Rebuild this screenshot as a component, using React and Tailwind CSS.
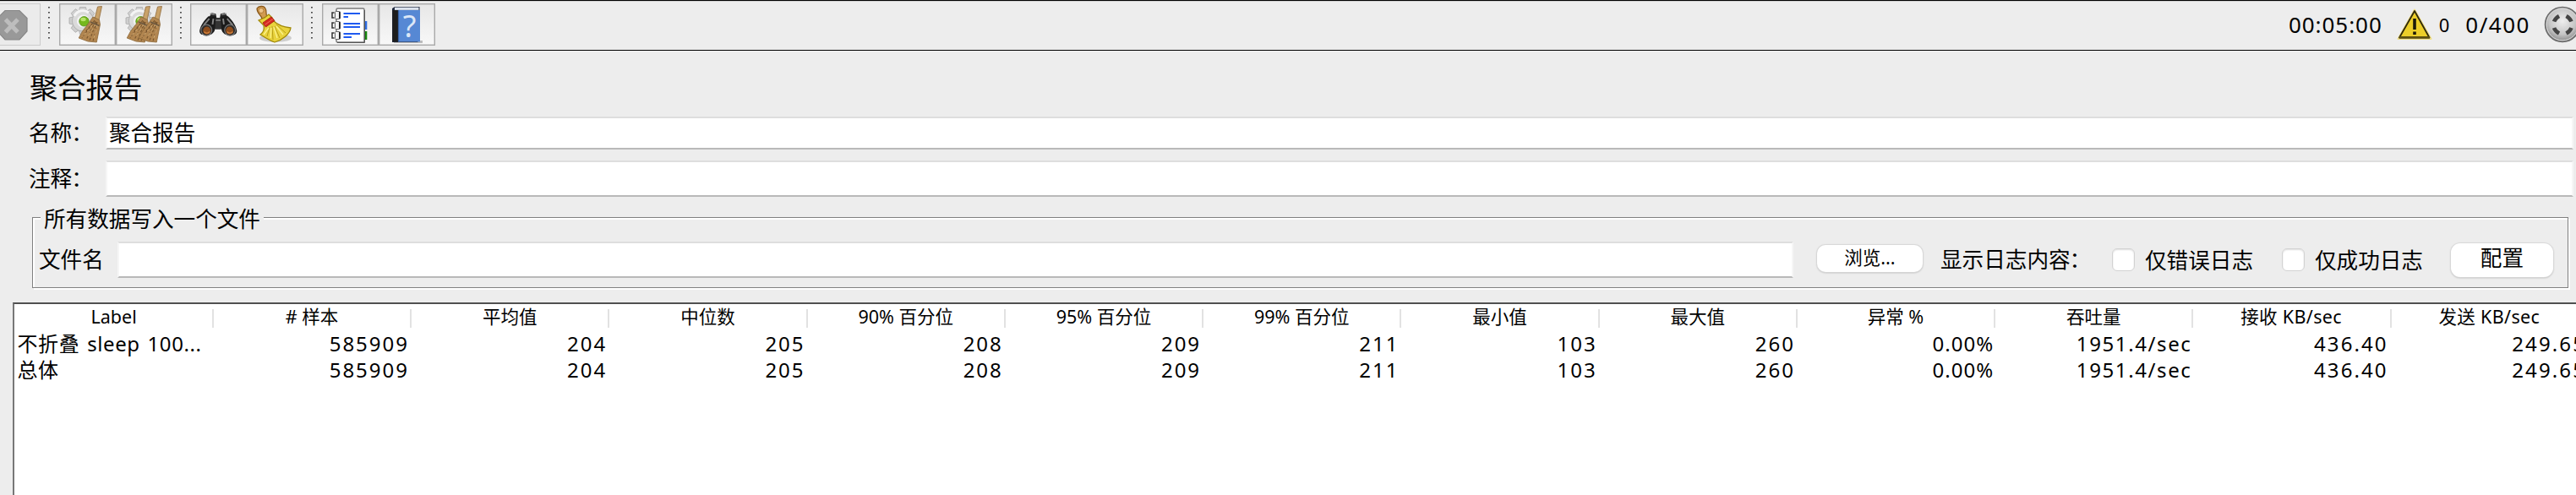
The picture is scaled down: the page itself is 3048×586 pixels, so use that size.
const columns = [
  ['Label', '不折叠 sleep 100...', '总体'],
  ['# 样本', '585909', '585909'],
  ['平均值', '204', '204'],
  ['中位数', '205', '205'],
  ['90% 百分位', '208', '208'],
  ['95% 百分位', '209', '209'],
  ['99% 百分位', '211', '211'],
  ['最小值', '103', '103'],
  ['最大值', '260', '260'],
  ['异常 %', '0.00%', '0.00%'],
  ['吞吐量', '1951.4/sec', '1951.4/sec'],
  ['接收 KB/sec', '436.40', '436.40'],
  ['发送 KB/sec', '249.65', '249.65'],
];

function cellStyle(value, i) {
  if (i === 0) return 'pl-[2px] [word-spacing:2px] tracking-[0.600px]';
  if (value.endsWith('%')) return 'justify-end pr-[2px] tracking-[1.000px]';
  if (value.endsWith('sec')) return 'justify-end pr-[2px] tracking-[1.600px]';
  if (value.includes('.')) return 'justify-end pr-[4px] tracking-[2.100px]';
  return 'justify-end pr-[3px] tracking-[2.000px]';
}

function ToolButton({ children }) {
  return (
    <div className="h-[50px] w-[67px] shrink-0 border border-[#a9a9a9] bg-linear-to-b from-[#e7e7e7] to-[#f8f8f8] shadow-[inset_0_0_0_0.5px_#b5b5b5]">
      <svg className="block h-12 w-[65px]" viewBox="1 1 65 48">{children}</svg>
    </div>
  );
}

function Dots() {
  return (
    <svg className="h-[38px] w-[2px] shrink-0" viewBox="0 0 2 38">
      {[0, 6, 12, 18, 24, 30, 36].map((y) => (
        <rect key={y} x="0.2" y={y} width="1.5" height="1.6" fill="#222" />
      ))}
    </svg>
  );
}

function Gear() {
  const angles = [0, 45, 90, 135, 180, 225, 270, 315];
  return (
    <g>
      <g fill="#cfcfcf" stroke="#aaa" strokeWidth="0.8">
        {angles.map((a) => (
          <path key={a} d="M23.5 9 L24.500 4.500 H31.500 L32.500 9 Z" transform={`rotate(${a} 28 20.5)`} />
        ))}
        <circle cx="28" cy="20.5" r="12.6" />
      </g>
      <circle cx="28" cy="20.5" r="11.8" fill="#dadada" />
      <path d="M18 15a11 11 0 0 1 17-4" stroke="#f4f4f4" strokeWidth="3" fill="none" />
      <circle cx="28.5" cy="21" r="7.6" fill="#f2f2f2" />
      <circle cx="29.5" cy="21.3" r="5.7" fill="#75b81d" stroke="#4f8b12" strokeWidth="0.8" />
      <ellipse cx="28.5" cy="19" rx="3.2" ry="2.2" fill="#b7e36a" />
    </g>
  );
}

function StrawBroom({ x = 0 }) {
  return (
    <g transform={`translate(${x} 0)`}>
      <path d="M45.5 4 L50.5 3.5 L47 20 L42 18.5 Z" fill="#c9a269" stroke="#8f6b3e" strokeWidth="0.8" />
      <path d="M40 16 L47.500 19.500 L48.500 25 L44.300 46 L34 45 L23.2 41 L27.500 33 L34.500 24 Z" fill="#b28650" stroke="#8a6738" strokeWidth="0.8" />
      <path d="M42 20 L27 41 M43 21 L32 43 M44 22 L36 44 M45 22 L40 45 M40 23 L30 35" stroke="#76542d" strokeWidth="1.1" strokeDasharray="3 2" fill="none" />
      <path d="M43 25 L33 40 M45 26 L41 41 M39 26 L29 38" stroke="#d5b07a" strokeWidth="1" strokeDasharray="3 3" fill="none" />
      <path d="M37 22 L47.500 26.500" stroke="#6d5940" strokeWidth="1.6" />
    </g>
  );
}

function Binoculars() {
  return (
    <g transform="translate(-0.4 0.6) scale(0.96 0.97)">
      <path d="M24 16 L27 11 L32 12 L33 17 L37 17 L38 12 L43 11 L47 16 L49 22 H21 Z" fill="#242424" />
      <rect x="30" y="17" width="10" height="14" rx="2" fill="#343434" />
      <path d="M23 15 C18 20 13 26 12 33 C12 38 17 39 22 38 C27 38 30 35 31 31 L32 16 Z" fill="#1b1b1b" />
      <path d="M47 15 C52 20 57 26 58 33 C58 38 53 39 48 38 C43 38 40 35 39 31 L38 16 Z" fill="#1b1b1b" />
      <path d="M24 18 L17 26 M29 18 L28 25 M46 18 L53 26 M41 18 L42 25" stroke="#858585" strokeWidth="2" />
      <path d="M25 12 L31 13 M39 13 L45 12 M32 20 H38" stroke="#858585" strokeWidth="1.5" />
      <circle cx="20.5" cy="32" r="6.7" fill="#2b2b2b" stroke="#777" strokeWidth="1.2" />
      <circle cx="49.5" cy="32" r="6.7" fill="#2b2b2b" stroke="#777" strokeWidth="1.2" />
      <circle cx="21" cy="32.5" r="4.7" fill="#8d4c1c" />
      <circle cx="49" cy="32.5" r="4.7" fill="#8d4c1c" />
      <path d="M17.5 34q4 3.5 7 0M46 34q4 3.5 7 0" stroke="#ce7f3c" strokeWidth="1.6" fill="none" />
    </g>
  );
}

function YellowBroom() {
  return (
    <g>
      <ellipse cx="34" cy="41" rx="19" ry="5" fill="#bdbdbd" opacity="0.7" />
      <path d="M12 6 C14 3 20 2 22 6 C24 9 22 12 24 16 L18 18 C17 14 12 12 12 6 Z" fill="#d29b50" stroke="#855417" strokeWidth="1.2" />
      <circle cx="17" cy="8.5" r="3" fill="#edc488" stroke="#a56f2a" strokeWidth="0.8" />
      <path d="M14 20 L21 17 L26 13 L30 17 L32 21 C37 26 44 28 52 29 C51 36 43 43 33 46 C27 44 21 40 16 37 C20 34 21 30 20 26 Z" fill="#e9d33d" stroke="#a18908" strokeWidth="1.3" />
      <path d="M27 28 L24 39 M30 27 L31 43 M33 27 L39 41 M35 25 L46 35" stroke="#b9a01a" strokeWidth="1" />
      <path d="M26 29 L20 37 M29 29 L28 41 M32 28 L36 41 M35 27 L43 37" stroke="#fbf18c" strokeWidth="1.3" />
      <path d="M19 23 L29 16 L33 20.5 L22.5 28 Z" fill="#d62a21" stroke="#a01610" strokeWidth="0.8" />
      <path d="M21.5 25.2 L30.8 18.6" stroke="#ee6a5c" strokeWidth="1" />
    </g>
  );
}

function Notebook() {
  return (
    <g>
      <rect x="49" y="21" width="4.3" height="10" fill="#2f6de0" />
      <rect x="49" y="33" width="4.3" height="10" fill="#16850d" />
      <rect x="17" y="6" width="33" height="40" rx="1.5" fill="#fff" stroke="#7b7b7b" strokeWidth="1.5" />
      <path d="M18 46.5H50.5V8" stroke="#555" strokeWidth="1" fill="none" />
      {[14, 26, 38].map((y) => (
        <g key={y}>
          <rect x="15.5" y={y - 4.5} width="6" height="9" rx="1" fill="#f4f4f4" stroke="#666" strokeWidth="1" />
          <path d={`M14.5 ${y - 3}h-2.5v6h2.5`} fill="none" stroke="#333" strokeWidth="1.5" />
          <path d={`M20.8 ${y - 4}v8`} stroke="#222" strokeWidth="1.6" />
        </g>
      ))}
      <path d="M25.5 12H45M25.5 24H45M25.5 28H45M25.5 36H45" stroke="#1f5af0" strokeWidth="2" />
      <path d="M25.5 16H31M25.5 40H35" stroke="#1f5af0" strokeWidth="1.8" />
    </g>
  );
}

function HelpBook() {
  return (
    <g>
      <rect x="18" y="44" width="34" height="3" fill="#bcbcbc" />
      <path d="M16 6 L19 4 H48.5 V43 L46 46 H16 Z" fill="#222b40" />
      <rect x="19" y="4.7" width="28.5" height="3.2" fill="#dce3ee" />
      <rect x="23" y="8" width="26" height="37.5" fill="#5688d4" />
      <rect x="16.5" y="8" width="6.5" height="37.5" fill="#1d1d1d" />
      <path d="M23.5 8V45" stroke="#36609f" strokeWidth="1.2" />
      <text x="36.5" y="39.5" textAnchor="middle" fontFamily="Noto Sans" fontSize="36" fill="#dce7f7">?</text>
    </g>
  );
}

function StopIcon() {
  return (
    <svg className="block h-12 w-[46px]" viewBox="0 0 46 48">
      <path d="M6 7.500 H23 L32 16.500 V32 L23 42 H6 L-3 32 V16.500 Z" fill="#999" stroke="#868686" strokeWidth="1.2" />
      <path d="M6.5 18 L21 33 M21 18 L6.5 33" stroke="#bdbdbd" strokeWidth="5" />
    </svg>
  );
}

function Warning() {
  return (
    <svg className="h-[38px] w-[42px] shrink-0" viewBox="0 0 42 38">
      <path d="M21 1.5 L40.5 36 H1.5 Z" fill="#f3de75" stroke="#f0df88" strokeWidth="2" strokeLinejoin="round" />
      <path d="M21 3 L38.5 34.5 H3 Z" fill="#ecce29" stroke="#302a0b" strokeWidth="1.8" strokeLinejoin="round" />
      <path d="M3 34.3H39" stroke="#5d500f" strokeWidth="2.5" />
      <path d="M21 12V25M21 27.5V31" stroke="#1c1a0b" strokeWidth="3.6" />
    </svg>
  );
}

function Status() {
  return (
    <svg className="h-11 w-[38px] shrink-0" viewBox="0 0 38 44">
      <defs>
        <radialGradient id="dial" cx="0.5" cy="0.4" r="0.6">
          <stop offset="0" stopColor="#eee" />
          <stop offset="0.65" stopColor="#c4c4c4" />
          <stop offset="1" stopColor="#858585" />
        </radialGradient>
      </defs>
      <circle cx="22" cy="22" r="20.5" fill="url(#dial)" stroke="#696969" strokeWidth="1.5" />
      <circle cx="22" cy="22" r="18.8" fill="none" stroke="#d8d8d8" strokeWidth="1" />
      <path d="M12 18.500q1.500-4 6-6.500M26.500 12q4.500 2.500 6 6.500M12 26q1.500 4 6 6.500M26.500 32.500q4.500-2.500 6-6.500" fill="none" stroke="#444" strokeWidth="4.6" />
    </svg>
  );
}

function Field({ className, children }) {
  return (
    <div className={`flex shrink-0 items-center border-2 border-t-[#dedede] border-r-[#f6f6f6] border-b-[#b9b9b9] border-l-[#f6f6f6] bg-white ${className}`}>
      {children}
    </div>
  );
}

function FieldLabel({ className, text }) {
  return (
    <span className={`flex ${className}`}>
      <span>{text}</span>
      <span className="-ml-px [text-spacing-trim:space-all]">：</span>
    </span>
  );
}

function Check({ label }) {
  return (
    <div className="flex items-center">
      <span className="h-[27px] w-[27px] rounded-[6px] border border-[#d2d2d2] bg-white shadow-[inset_0_1px_2px_#ddd]" />
      <span className="ml-[12px] mt-[2px]">{label}</span>
    </div>
  );
}

export default function App() {
  return (
    <div className="flex h-[586px] w-[3048px] flex-col overflow-hidden bg-[#ededed] font-['Noto_Sans','Noto_Sans_CJK_SC',sans-serif] text-[25.600px] leading-none whitespace-nowrap text-black">
      <header className="flex h-[60px] shrink-0 items-start border-y border-black pt-[3px] shadow-[inset_0_1px_0_#cfcfcf]">
        <div className="h-[50px] w-12 shrink-0 border border-l-0 border-[#ccc] bg-[#ebebeb]">
          <StopIcon />
        </div>
        <div className="mt-1 ml-[9px] flex"><Dots /></div>
        <div className="ml-[11px] flex">
          <ToolButton><Gear /><StrawBroom /></ToolButton>
          <ToolButton><Gear /><StrawBroom x={-10} /><StrawBroom x={4} /></ToolButton>
        </div>
        <div className="mt-1 ml-[9px] flex"><Dots /></div>
        <div className="ml-[10px] flex">
          <ToolButton><Binoculars /></ToolButton>
          <ToolButton><YellowBroom /></ToolButton>
        </div>
        <div className="mt-1 ml-[9px] flex"><Dots /></div>
        <div className="ml-[11px] flex">
          <ToolButton><Notebook /></ToolButton>
          <ToolButton><HelpBook /></ToolButton>
        </div>
        <div className="ml-auto flex h-[50px] items-center">
          <span className="mr-[17px] text-[26px] tracking-[0.950px]">00:05:00</span>
          <Warning />
          <span className="ml-[8px] text-[22px]">0</span>
          <span className="mr-[16px] ml-[19px] text-[26px] tracking-[1.500px]">0/400</span>
          <Status />
        </div>
      </header>

      <section className="flex h-[298px] shrink-0 flex-col">
        <h1 className="ml-[35px] flex h-[78px] shrink-0 items-center pt-[10px] text-[33.300px]">聚合报告</h1>
        <div className="flex h-[39px] shrink-0 items-center pl-[34px]">
          <FieldLabel className="w-[91px]" text="名称" />
          <Field className="h-[39px] w-[2920px] pl-[2px]">聚合报告</Field>
        </div>
        <div className="mt-[13px] flex h-[43px] shrink-0 items-center pl-[34px]">
          <FieldLabel className="w-[91px]" text="注释" />
          <Field className="h-[43px] w-[2920px]" />
        </div>
        <div className="mt-[24px] ml-[38px] h-[84px] w-[3001px] shrink-0 border border-[#808080] shadow-[inset_2px_2px_0_#fff,2px_2px_0_#fff]">
          <div className="-mt-[14px] ml-[9px] flex h-[32px] w-[264px] items-center bg-[#ededed] pl-[4px]">所有数据写入一个文件</div>
          <div className="mt-[10px] flex h-[43px] items-center pl-[7px]">
            <span className="w-[93px]">文件名</span>
            <Field className="h-[43px] w-[1983px]" />
            <button className="mb-[4px] ml-[28px] h-[32px] w-[125px] rounded-[10px] bg-white pb-[2px] text-[21.500px] shadow-[0_0_1px_1px_#d8d8d8,0_1px_2px_#aaa]">浏览...</button>
            <FieldLabel className="ml-[21px] w-[203px]" text="显示日志内容" />
            <Check label="仅错误日志" />
            <div className="ml-[34px]"><Check label="仅成功日志" /></div>
            <button className="ml-[33px] h-[40px] w-[121px] rounded-[11px] bg-white pb-[4px] shadow-[0_0_1px_1px_#d8d8d8,0_1px_2px_#aaa]">配置</button>
          </div>
        </div>
      </section>

      <main className="ml-[15px] flex grow border-t-2 border-l-2 border-t-[#505050] border-l-[#777] bg-white pl-[1.500px]">
        {columns.map(([title, ...cells], i) => (
          <div key={title} className="w-[234.270px] shrink-0">
            <div
              className={`mt-[6px] mb-[3px] flex h-[22px] items-center justify-center border-r-2 border-[#e2e2e2] pb-[5px] text-[21.500px] ${title.endsWith('sec') ? 'pr-px tracking-[0.350px]' : ''}`}
            >
              {title}
            </div>
            {cells.map((value, row) => (
              <div key={row} className={`flex h-[31.500px] items-center text-[24px] ${cellStyle(value, i)}`}>
                {value}
              </div>
            ))}
          </div>
        ))}
      </main>
    </div>
  );
}
